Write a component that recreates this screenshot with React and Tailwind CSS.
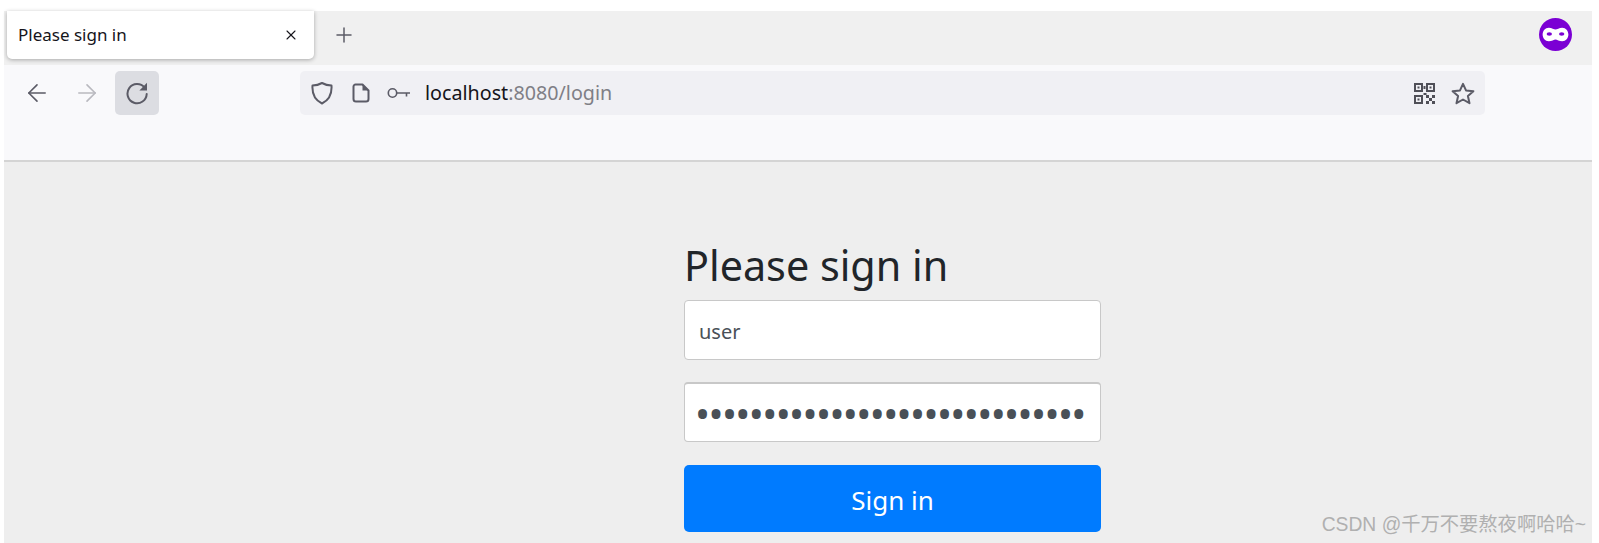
import React from "react";
import { X, Plus, ArrowLeft, ArrowRight } from "lucide-react";

const font = "font-['Noto_Sans','Open_Sans',sans-serif]";

function ReloadIcon() {
  return (
    <svg width="24" height="24" viewBox="0 0 24 24" fill="none" stroke="#5b5b66" strokeWidth="2">
      <path d="M19.6 6.6 A9.6 9.6 0 1 0 21.7 13" strokeLinecap="round" />
      <path d="M22 1.8 V9.4 H14.4 Z" fill="#5b5b66" stroke="none" />
    </svg>
  );
}

function ShieldIcon() {
  return (
    <svg width="22" height="24" viewBox="0 0 22 24" fill="none" stroke="#5b5b66" strokeWidth="2" strokeLinejoin="round">
      <path d="M11 2 C14 3.6 17 4.4 20.5 4.6 C21 12 18.5 19 11 22.5 C3.5 19 1 12 1.5 4.6 C5 4.4 8 3.6 11 2 Z" />
    </svg>
  );
}

function PageIcon() {
  return (
    <svg width="18" height="20" viewBox="0 0 18 20" fill="none" stroke="#5b5b66" strokeWidth="2" strokeLinejoin="round">
      <path d="M3.5 1.5 H10.5 L16.5 7.5 V16 A2.5 2.5 0 0 1 14 18.5 H4 A2.5 2.5 0 0 1 1.5 16 V3.5 A2 2 0 0 1 3.5 1.5 Z" />
      <path d="M10.5 1.5 L16.5 7.5 H10.5 Z" fill="#5b5b66" stroke="none" />
    </svg>
  );
}

function KeyIcon() {
  return (
    <svg width="24" height="12" viewBox="0 0 24 12" fill="none" stroke="#5b5b66" strokeWidth="1.6">
      <circle cx="5.5" cy="6" r="4.2" />
      <path d="M9.7 6 H23 M19.5 6 V9.5" />
    </svg>
  );
}

function QrIcon() {
  return (
    <svg width="21" height="21" viewBox="0 0 21 21" fill="#4f4f57">
      <path fillRule="evenodd" d="M0 0H9V9H0Z M2 2V7H7V2Z M12 0H21V9H12Z M14 2V7H19V2Z M0 12H9V21H0Z M2 14V19H7V14Z" />
      <rect x="3.5" y="3.5" width="2" height="2" />
      <rect x="15.5" y="3.5" width="2" height="2" />
      <rect x="3.5" y="15.5" width="2" height="2" />
      <rect x="9.5" y="3" width="2" height="3" />
      <rect x="9.5" y="10" width="3" height="2" />
      <rect x="12" y="12" width="3" height="3" />
      <rect x="18" y="12" width="3" height="3" />
      <rect x="15" y="15" width="3" height="3" />
      <rect x="12" y="18" width="3" height="3" />
      <rect x="18" y="18" width="3" height="3" />
    </svg>
  );
}

function StarIcon() {
  return (
    <svg width="24" height="23" viewBox="0 0 24 23" fill="none" stroke="#5b5b66" strokeWidth="2" strokeLinejoin="round">
      <path d="M12 1.8 L15 8.4 L22.4 9.2 L16.9 14 L18.5 21.2 L12 17.5 L5.5 21.2 L7.1 14 L1.6 9.2 L9 8.4 Z" />
    </svg>
  );
}

function MaskIcon() {
  return (
    <svg width="33" height="33" viewBox="0 0 32 32">
      <circle cx="16" cy="16" r="16" fill="#7b00d4" />
      <path d="M9.5 9.5 C12.5 9.5 14.5 11.2 16 11.2 C17.5 11.2 19.5 9.5 22.5 9.5 C26 9.5 28.5 12.5 28.5 16 C28.5 19.5 26 22.5 22.5 22.5 C19.5 22.5 17.5 20.8 16 20.8 C14.5 20.8 12.5 22.5 9.5 22.5 C6 22.5 3.5 19.5 3.5 16 C3.5 12.5 6 9.5 9.5 9.5 Z" fill="#fff" />
      <ellipse cx="10" cy="15.5" rx="2.6" ry="1.7" fill="#7b00d4" />
      <ellipse cx="22" cy="15.5" rx="2.6" ry="1.7" fill="#7b00d4" />
    </svg>
  );
}

export default function App() {
  return (
    <div className={`h-[543px] w-[1599px] overflow-hidden bg-white pt-[11px] pl-[4px] pr-[7px] relative ${font}`}>
      {/* tab strip */}
      <div className="flex h-[54px] items-start bg-[#f0f0f0] pl-[3px]">
        <div className="flex h-[48px] w-[307px] items-center justify-between rounded-b-[5px] bg-white pl-[11px] pr-[15px] shadow-[0_1px_4px_rgba(0,0,0,0.3)]">
          <span className="text-[17px] text-[#15141a]">Please sign in</span>
          <X size={16} color="#15141a" strokeWidth={1.6} />
        </div>
        <div className="ml-[18px] flex h-[48px] items-center">
          <Plus size={24} color="#5b5b66" strokeWidth={1.5} />
        </div>
        <div className="ml-auto mr-[20px] mt-[7px]">
          <MaskIcon />
        </div>
      </div>

      {/* toolbar */}
      <div className="flex h-[97px] items-start border-b-2 border-[#d4d4d4] bg-[#f9f9fb] pt-[6px]">
        <div className="ml-[15px] flex items-center">
          <div className="flex h-[44px] w-[36px] items-center justify-center">
            <ArrowLeft size={28} color="#5b5b66" strokeWidth={1.4} />
          </div>
          <div className="ml-[14px] flex h-[44px] w-[36px] items-center justify-center">
            <ArrowRight size={28} color="#b9b9bf" strokeWidth={1.4} />
          </div>
          <div className="ml-[10px] flex h-[44px] w-[44px] items-center justify-center rounded-[5px] bg-[#dcdde2]">
            <ReloadIcon />
          </div>
        </div>
        <div className="ml-[141px] flex h-[44px] w-[1185px] items-center rounded-[5px] bg-[#f0f0f4] pl-[11px] pr-[10px]">
          <ShieldIcon />
          <div className="ml-[19px]"><PageIcon /></div>
          <div className="ml-[17px]"><KeyIcon /></div>
          <span className="ml-[14px] text-[19.7px] text-[#15141a]">
            localhost<span className="text-[#7f7f86]">:8080/login</span>
          </span>
          <div className="ml-auto"><QrIcon /></div>
          <div className="ml-[16px]"><StarIcon /></div>
        </div>
      </div>

      {/* page */}
      <div className="h-[381px] bg-[#eeeeee] pl-[680px] pt-[79px]">
        <form className="w-[417px]">
          <h2 className="text-[41.3px] leading-[48px] text-[#212529]">Please sign in</h2>
          <input
            readOnly
            value="user"
            className="mt-[11px] block h-[60px] w-full rounded-[4px] border border-[#c8c8c8] bg-white px-[14px] pt-[3px] text-[20px] text-[#495057] outline-none"
          />
          <input
            readOnly
            type="password"
            value="aaaaaaaaaaaaaaaaaaaaaaaaaaaaa"
            className="mt-[22px] block h-[60px] w-full rounded-[4px] border border-[#c8c8c8] border-t-2 bg-white pl-[10px] pr-[2px] pt-[3px] text-[40px] tracking-[-1.6px] text-[#495057] outline-none"
          />
          <button
            type="button"
            className="mt-[23px] block h-[67px] w-full rounded-[5px] bg-[#007bff] pt-[3px] text-[26px] text-white"
          >
            Sign in
          </button>
        </form>
      </div>

      {/* watermark */}
      <div className="absolute bottom-[3px] right-[13px] font-['Liberation_Sans','Noto_Sans_CJK_SC',sans-serif] text-[19.3px] text-[#b0b0b0]">
        CSDN @千万不要熬夜啊哈哈~
      </div>
    </div>
  );
}
